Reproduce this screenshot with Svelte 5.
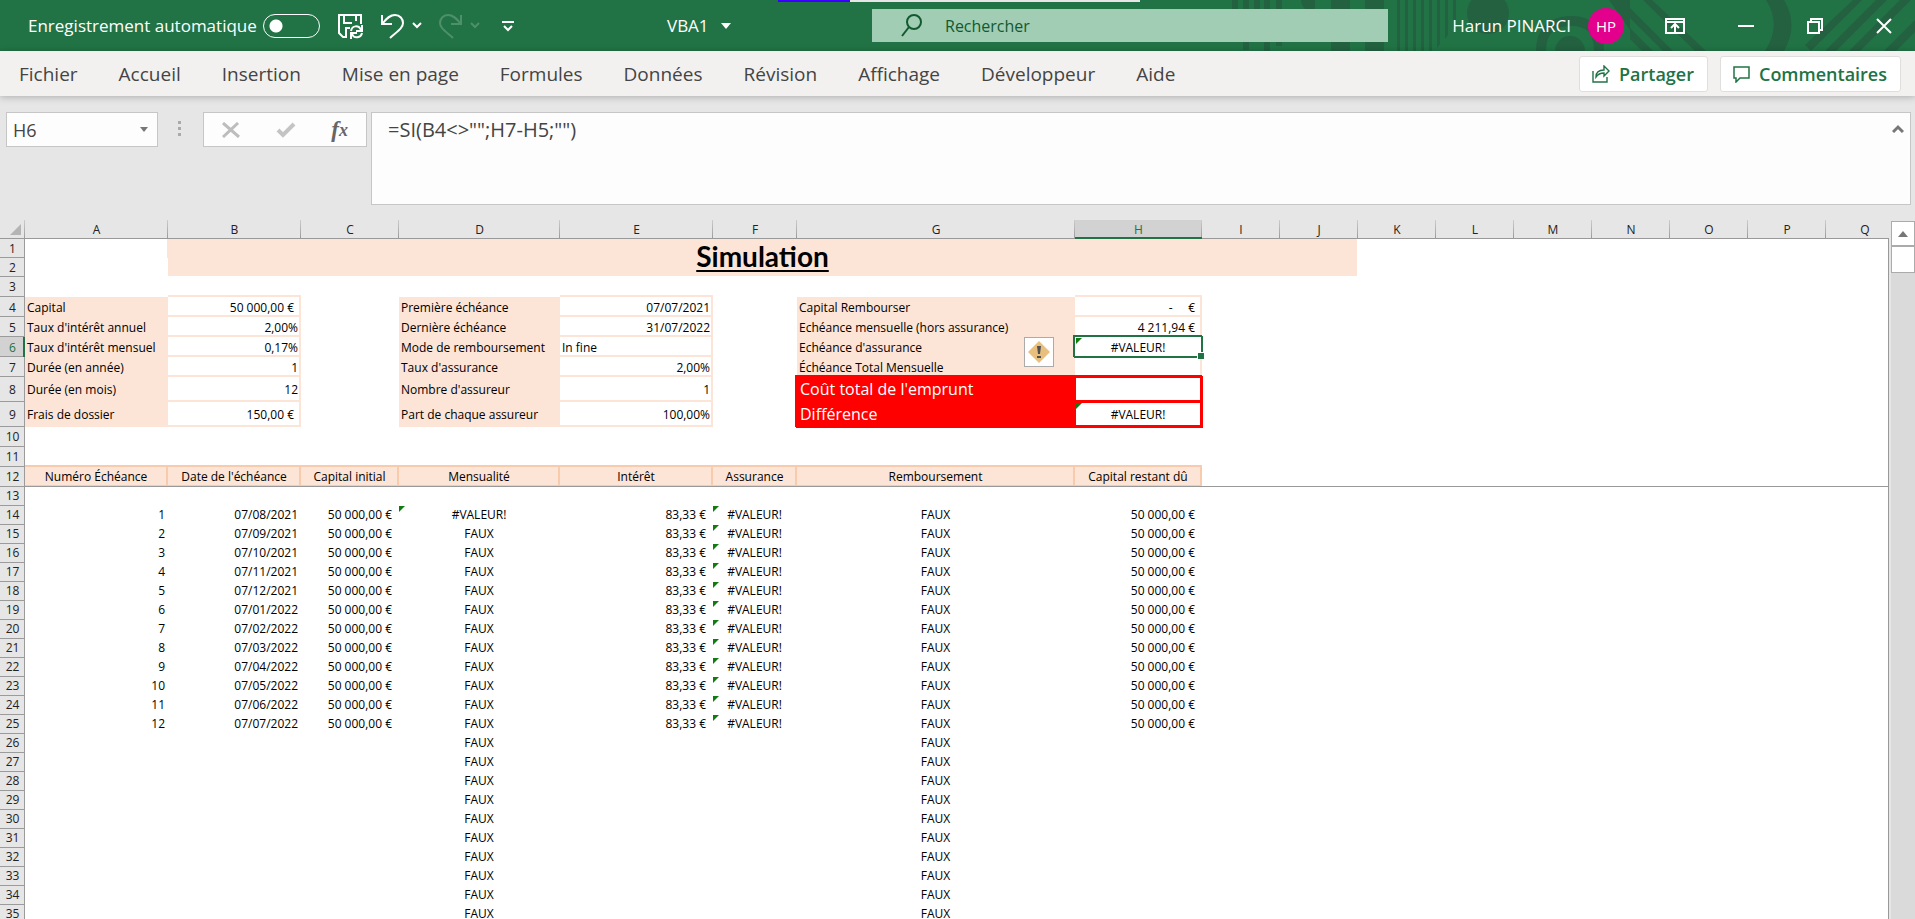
<script>
  const tabs = ['Fichier', 'Accueil', 'Insertion', 'Mise en page', 'Formules', 'Données', 'Révision', 'Affichage', 'Développeur', 'Aide'];

  const columns = [
    ['A', 143], ['B', 133], ['C', 98], ['D', 161], ['E', 153], ['F', 84], ['G', 278], ['H', 127],
    ['I', 78], ['J', 78], ['K', 78], ['L', 78], ['M', 78], ['N', 78], ['O', 78], ['P', 78], ['Q', 78]
  ];

  const letters = columns.map((c) => c[0]);
  const lastRow = 35;
  const cells = {};

  function set(ref, text, cls = '', flag = false) {
    cells[ref] = { text, cls, flag };
  }

  function rowHeight(r) {
    if (r === 8 || r === 9) return 25;
    if (r >= 3 && r <= 12) return 20;
    return 19;
  }

  // loan parameters, rows 4 to 9
  const params = [
    ['Capital', '50 000,00 €', 'Première échéance', '07/07/2021'],
    ["Taux d'intérêt annuel", '2,00%', 'Dernière échéance', '31/07/2022'],
    ["Taux d'intérêt mensuel", '0,17%', 'Mode de remboursement', 'In fine'],
    ['Durée (en année)', '1', "Taux d'assurance", '2,00%'],
    ['Durée (en mois)', '12', "Nombre d'assureur", '1'],
    ['Frais de dossier', '150,00 €', 'Part de chaque assureur', '100,00%']
  ];

  for (const ref of ['B3', 'E3', 'H3']) set(ref, '', 'above');

  params.forEach(([a, b, d, e], i) => {
    const r = i + 4;
    set('A' + r, a, 'label');
    set('B' + r, b, b.endsWith('€') ? 'box money' : 'box right');
    set('D' + r, d, 'label');
    set('E' + r, e, e === 'In fine' ? 'box' : 'box right');
  });

  set('G4', 'Capital Rembourser', 'label');
  set('G5', 'Echéance mensuelle (hors assurance)', 'label');
  set('G6', "Echéance d'assurance", 'label warn');
  set('G7', 'Échéance Total Mensuelle', 'label');
  set('G8', "Coût total de l'emprunt", 'total');
  set('G9', 'Différence', 'total');
  set('H4', '-\u00a0\u00a0\u00a0\u00a0\u00a0€', 'box money');
  set('H5', '4 211,94 €', 'box money');
  set('H6', '#VALEUR!', 'center selected', true);
  set('H7', '', 'box');
  set('H8', '', 'result');
  set('H9', '#VALEUR!', 'result center', true);

  const headings = ['Numéro Échéance', "Date de l'échéance", 'Capital initial', 'Mensualité', 'Intérêt', 'Assurance', 'Remboursement', 'Capital restant dû'];
  headings.forEach((h, i) => {
    set(letters[i] + 11, '', 'above-heading');
    set(letters[i] + 12, h, 'heading center');
  });

  for (let n = 1; n <= lastRow - 13; n++) {
    const r = n + 13;
    set('D' + r, n === 1 ? '#VALEUR!' : 'FAUX', 'center', n === 1);
    set('G' + r, 'FAUX', 'center');
    if (n > 12) continue;
    const month = String(((n + 6) % 12) + 1).padStart(2, '0');
    set('A' + r, String(n), 'right');
    set('B' + r, `07/${month}/${n < 6 ? 2021 : 2022}`, 'right');
    set('C' + r, '50 000,00 €', 'money');
    set('E' + r, '83,33 €', 'money');
    set('F' + r, '#VALEUR!', 'center', true);
    set('H' + r, '50 000,00 €', 'money');
  }

  // B1:J2 is one merged cell
  const rows = Array.from({ length: lastRow }, (_, i) => {
    const r = i + 1;
    const list = letters
      .filter((l) => r > 2 || l === 'A' || l > 'J')
      .map((l) => ({ ref: l + r, text: '', cls: '', flag: false, ...cells[l + r] }));
    if (r === 1) list.splice(1, 0, { ref: 'B1', text: 'Simulation', cls: 'title', span: true });
    return { r, list };
  });

  let selected = $state('H6');
  let formula = $state('=SI(B4<>"";H7-H5;"")');
  let autosave = $state(false);
</script>

<div class="app">
  <header class="titlebar">
    <svg class="pattern" width="690" height="51" viewBox="0 0 690 51" aria-hidden="true">
      <g fill="#236140">
        <path d="M7 0h6v9h-6zM18 0h6v50h-6zM29 0h6v9h-6zM39 0h6v51h-6zM51 0h6v46h-6zM76 0h14v9h-10q-4-4-4-9zM106 0h19v51h-19zM140 0h19v51h-19z" />
        <path d="M172 0h3v51h-3zM180 0h3v51h-3zM188 0h3v51h-3zM196 0h3v51h-3zM204 0h3v51h-3zM212 0h3v44l-3 4zM220 0h3v35l-3 4zM228 0h3v26l-3 4z" />
        <circle cx="263" cy="13" r="21" />
        <path d="M330 51a14 14 0 0 1 30 0z" />
        <path d="M384 0h21v30zM405 8l43 43h-10l-33-33zM405 28l23 23h-11l-12-12zM418 0h9l54 51h-11z" />
        <path d="M541 0h18q15 25 0 51h-19q17-26 1-51z" />
        <path d="M628 0h9l-51 51-6-6zM651 0h11l-51 51h-11zM675 0h11l-51 51h-11zM690 20v12l-19 19h-12z" />
      </g>
      <path d="M316 51q0-29 29-30t29 30" fill="none" stroke="#236140" stroke-width="10" />
    </svg>
    <span class="progress" aria-hidden="true"></span>

    <div class="quick">
      <label for="autosave">Enregistrement automatique</label>
      <input id="autosave" class="toggle" type="checkbox" bind:checked={autosave} />
      <button class="save" aria-label="Enregistrer">
        <svg width="26" height="26" viewBox="0 0 26 26" fill="none" stroke="#fff" stroke-width="2">
          <path d="M9 24H5L1 20V2h22v9M6 2v8h8M18 2v6M8 24v-9h4" />
          <path d="M13 18c1-6 8-6 10-1M24 12v6h-6M24 20c-1 5-8 6-10 1M13 26v-6h6" />
        </svg>
      </button>
      <button class="undo" aria-label="Annuler">
        <svg width="41" height="26" viewBox="0 0 41 26" fill="none" stroke="#fff" stroke-width="2">
          <path d="M1 2v9h10M2 10c4-5 7-8 12-8 5 0 8 4 8 8 0 5-5 8-13 15M32 10l4 4 4-4" />
        </svg>
      </button>
      <button class="undo" aria-label="Rétablir" disabled>
        <svg width="41" height="26" viewBox="0 0 41 26" fill="none" stroke="#4d9069" stroke-width="2">
          <path d="M22 2v9H12M21 10c-4-5-7-8-12-8-5 0-8 4-8 8 0 5 5 8 13 15M32 10l4 4 4-4" />
        </svg>
      </button>
      <button class="customise" aria-label="Personnaliser">
        <svg width="12" height="12" viewBox="0 0 12 12" fill="none" stroke="#fff" stroke-width="2">
          <path d="M0 2h12M2 6l4 4 4-4" />
        </svg>
      </button>
    </div>

    <button class="document">
      VBA1
      <svg width="10" height="6" viewBox="0 0 10 6"><path d="M0 0h10L5 6z" fill="#fff" /></svg>
    </button>

    <div class="search">
      <svg width="22" height="24" viewBox="0 0 22 24" fill="none" stroke="#13592f" stroke-width="2">
        <circle cx="13" cy="8" r="7" /><path d="M8 13L1 22" />
      </svg>
      <input type="text" aria-label="Rechercher" placeholder="Rechercher" />
    </div>

    <div class="account">
      <span class="user">Harun PINARCI</span>
      <span class="avatar">HP</span>
      <button aria-label="Options d'affichage du ruban">
        <svg width="20" height="16" viewBox="0 0 20 16" fill="none" stroke="#fff">
          <path d="M1 1h18v14H1zM1 4h18" stroke-width="2" /><path d="M10 14V7M6 10l4-4 4 4" stroke-width="2" />
        </svg>
      </button>
      <button aria-label="Réduire">
        <svg width="16" height="16" viewBox="0 0 16 16"><path d="M0 7h16v2H0z" fill="#fff" /></svg>
      </button>
      <button aria-label="Restaurer">
        <svg width="16" height="16" viewBox="0 0 16 16" fill="none" stroke="#fff" stroke-width="2">
          <path d="M1 4h11v11H1zM4 4V1h11v11h-3" />
        </svg>
      </button>
      <button aria-label="Fermer">
        <svg width="16" height="16" viewBox="0 0 16 16" stroke="#fff" stroke-width="2"><path d="M1 1l14 14M15 1L1 15" /></svg>
      </button>
    </div>
  </header>

  <nav class="ribbon">
    {#each tabs as tab}
      <button class="tab">{tab}</button>
    {/each}
    <div class="actions">
      <button class="action">
        <svg width="18" height="18" viewBox="0 0 18 18" fill="none" stroke="#217346" stroke-width="1.4">
          <path d="M1 6v11h14v-5M4 12c0-5 3-7 8-7V1l5 5-5 5V8c-4 0-6 1-8 4z" />
        </svg>
        Partager
      </button>
      <button class="action">
        <svg width="17" height="18" viewBox="0 0 17 18" fill="none" stroke="#217346" stroke-width="1.5">
          <path d="M1 2h15v11H7l-4 4v-4H1z" />
        </svg>
        Commentaires
      </button>
    </div>
  </nav>

  <section class="formula-bar">
    <div class="name-box">
      <input type="text" aria-label="Zone Nom" bind:value={selected} />
      <button aria-label="Liste des noms">
        <svg width="8" height="5" viewBox="0 0 8 5"><path d="M0 0h8L4 5z" fill="#777" /></svg>
      </button>
    </div>
    <span class="grip" aria-hidden="true"></span>
    <div class="edit">
      <button aria-label="Annuler la saisie">
        <svg width="18" height="16" viewBox="0 0 18 16" stroke="#bdbdbd" stroke-width="3"><path d="M1 1l16 14M16 1L1 15" /></svg>
      </button>
      <button aria-label="Valider la saisie">
        <svg width="20" height="16" viewBox="0 0 20 16" fill="none" stroke="#c4c4c4" stroke-width="4"><path d="M2 8l5 5L18 2" /></svg>
      </button>
      <button class="fx" aria-label="Insérer une fonction">f<sub>x</sub></button>
    </div>
    <div class="formula">
      <textarea aria-label="Barre de formule" spellcheck="false" bind:value={formula}></textarea>
      <button aria-label="Réduire la barre de formule">
        <svg width="12" height="9" viewBox="0 0 12 9" fill="none" stroke="#777" stroke-width="3"><path d="M1 8l5-5 5 5" /></svg>
      </button>
    </div>
  </section>

  <main class="workbook">
    <div class="sheet">
      <table>
        <colgroup>
          <col style="width: 25px" />
          {#each columns as [letter, width] (letter)}
            <col style="width: {width}px" />
          {/each}
        </colgroup>
        <thead>
          <tr>
            <th class="corner"><svg width="11" height="11" viewBox="0 0 11 11"><path d="M11 0v11H0z" fill="#b4b4b4" /></svg></th>
            {#each letters as letter}
              <th scope="col" class:current={letter === 'H'}>{letter}</th>
            {/each}
          </tr>
        </thead>
        <tbody>
          {#each rows as { r, list } (r)}
            <tr class:params={r >= 4 && r <= 7} class:schedule={r > 12} class:frozen={r === 12} style="height: {rowHeight(r)}px">
              <th scope="row" class:current={r === 6}>{r}</th>
              {#each list as cell (cell.ref)}
                <td class={cell.cls} colspan={cell.span ? 9 : 1} rowspan={cell.span ? 2 : 1}>
                  {#if cell.flag}<i class="flag"></i>{/if}
                  {cell.text}
                  {#if cell.ref === 'H6'}<i class="handle"></i>{/if}
                  {#if cell.ref === 'G6'}
                    <button class="alert" aria-label="Erreur de valeur">
                      <svg width="22" height="22" viewBox="0 0 22 22">
                        <path d="M11 0l11 11-11 11L0 11z" fill="#e8bf7d" />
                        <path d="M9 5h4l-1 8h-2zM9 15h4v2H9z" fill="#505050" />
                      </svg>
                    </button>
                  {/if}
                </td>
              {/each}
            </tr>
          {/each}
        </tbody>
      </table>
    </div>
    <div class="scrollbar">
      <button aria-label="Défiler vers le haut">
        <svg width="10" height="6" viewBox="0 0 10 6"><path d="M0 6h10L5 0z" fill="#777" /></svg>
      </button>
      <span class="thumb"></span>
    </div>
  </main>
</div>

<style>
  :global(body) {
    margin: 0;
    overflow: hidden;
  }

  .app {
    height: 100vh;
    display: flex;
    flex-direction: column;
    background: #e6e6e6;
    font-family: 'Open Sans', 'Noto Sans', sans-serif;
    color: #444;
  }

  button, input, textarea {
    font: inherit;
    color: inherit;
    background: none;
    border: 0;
    padding: 0;
    margin: 0;
    outline: 0;
  }

  button {
    display: flex;
    align-items: center;
    justify-content: center;
  }

  svg {
    display: block;
    flex: none;
  }

  .titlebar {
    position: relative;
    flex: none;
    height: 51px;
    display: grid;
    grid-template-columns: 667fr 205fr 516fr 527fr;
    align-items: center;
    background: #217346;
    color: #fff;
    font-size: 17px;
    line-height: 22px;
  }

  .titlebar > div, .document {
    position: relative;
  }

  .pattern {
    position: absolute;
    top: 0;
    right: 0;
  }

  .progress {
    position: absolute;
    top: 0;
    left: 778px;
    width: 362px;
    height: 2px;
    background: linear-gradient(90deg, #3a00ff 72px, #e6e6e6 72px);
  }

  .quick {
    display: flex;
    align-items: center;
    padding-left: 28px;
    white-space: nowrap;
  }

  .toggle {
    appearance: none;
    flex: none;
    width: 57px;
    height: 24px;
    margin: 0 18px 0 6px;
    border: 1px solid #fff;
    border-radius: 12px;
    background: radial-gradient(circle at 12px 11px, #fff 6px, transparent 7px);
  }

  .undo {
    margin-left: 17px;
  }

  .customise {
    margin-left: 22px;
  }

  .document {
    gap: 12px;
    justify-content: flex-start;
  }

  .search {
    display: flex;
    align-items: center;
    gap: 22px;
    height: 33px;
    padding-left: 29px;
    background: #a0cdb4;
    color: #13592f;
    font-size: 16px;
  }

  .search input {
    flex: 1;
  }

  .search input::placeholder {
    color: #13592f;
    opacity: 1;
  }

  .account {
    display: flex;
    align-items: center;
    justify-content: flex-end;
    gap: 53px;
    padding-right: 23px;
    white-space: nowrap;
  }

  .avatar {
    width: 36px;
    height: 36px;
    margin: 0 -12px 0 -36px;
    border-radius: 50%;
    background: #e3008c;
    font-size: 15px;
    line-height: 36px;
    text-align: center;
  }

  .ribbon {
    position: relative;
    flex: none;
    display: flex;
    align-items: center;
    gap: 41px;
    height: 45px;
    padding: 0 14px 0 19px;
    background: #f3f1ef;
    font-size: 19px;
    line-height: 26px;
    white-space: nowrap;
    box-shadow: 0 1px 7px rgba(0, 0, 0, 0.25);
  }

  .actions {
    display: flex;
    gap: 12px;
    margin-left: auto;
  }

  .action {
    gap: 9px;
    height: 36px;
    padding: 0 13px 0 12px;
    border: 1px solid #e1dfdd;
    border-radius: 3px;
    background: #fff;
    color: #217346;
    font-size: 18px;
    font-weight: 600;
  }

  .formula-bar {
    flex: none;
    display: flex;
    align-items: flex-start;
    padding: 16px 4px 15px 6px;
    font-size: 18px;
  }

  .name-box, .edit, .formula {
    box-sizing: border-box;
    display: flex;
    border: 1px solid #c6c6c6;
    background: #fdfdfd;
  }

  .name-box {
    width: 152px;
    height: 35px;
    padding: 0 9px 0 6px;
  }

  .name-box input {
    flex: 1;
    min-width: 0;
  }

  .grip {
    width: 3px;
    height: 15px;
    margin: 9px 22px 0 20px;
    background: repeating-linear-gradient(#aaa 0 3px, transparent 3px 6px);
  }

  .edit {
    justify-content: space-between;
    width: 164px;
    height: 35px;
    margin-right: 4px;
    padding: 0 18px;
  }

  .fx {
    font-family: 'Liberation Serif', serif;
    font-size: 23px;
    font-style: italic;
    font-weight: bold;
    line-height: 23px;
    color: #666;
  }

  .fx sub {
    font-size: 18px;
    line-height: 18px;
  }

  .formula {
    flex: 1;
    align-items: flex-start;
    height: 93px;
    padding: 4px 6px 4px 16px;
  }

  .formula textarea {
    flex: 1;
    height: 80px;
    font-size: 20px;
    line-height: 26px;
    resize: none;
  }

  .formula button {
    margin-top: 7px;
  }

  .workbook {
    flex: 1;
    min-height: 0;
    display: flex;
  }

  .sheet {
    position: relative;
    flex: 1;
    min-width: 0;
    overflow: hidden;
  }

  .sheet::after {
    content: '';
    position: absolute;
    top: 19px;
    right: 0;
    bottom: 0;
    width: 1px;
    background: #999;
  }

  table {
    table-layout: fixed;
    width: 1904px;
    border-collapse: separate;
    border-spacing: 0;
    font-family: 'Open Sans', sans-serif;
    font-size: 12px;
    line-height: 16px;
    color: #000;
  }

  th {
    padding: 0;
    font-weight: normal;
    color: #222;
    background: #e6e6e6;
  }

  thead th {
    height: 19px;
    box-shadow: inset 0 -1px #999;
    background: linear-gradient(#ccc, #999) right / 1px 100% no-repeat #e6e6e6;
  }

  .corner svg {
    margin-left: 10px;
  }

  thead th.current {
    background-color: #d2d2d2;
    box-shadow: inset 0 -2px #217346;
    color: #217346;
  }

  tbody th {
    box-shadow: inset -1px -1px #9b9b9b;
  }

  tbody th.current {
    background: #d2d2d2;
    box-shadow: inset -2px 0 #217346, inset 0 -1px #9b9b9b;
    color: #217346;
  }

  td {
    position: relative;
    padding: 0 3px 0 2px;
    background: #fff;
    white-space: nowrap;
  }

  .params td, .params th { padding-top: 2px; }
  .schedule td, .schedule th { padding-bottom: 2px; }

  .right { text-align: right; }
  .money { text-align: right; padding-right: 7px; }
  .center { text-align: center; }

  .title {
    padding-bottom: 4px;
    background: #fce4d6;
    box-shadow: inset -1px -1px #fff, -1px 0 #fce4d6;
    font-family: Lato, sans-serif;
    font-size: 28px;
    font-weight: bold;
    line-height: 32px;
    text-align: center;
    text-decoration: underline;
    text-decoration-thickness: 2px;
    text-underline-offset: 3px;
  }

  .label { background: #fce4d6; }
  .label.warn { z-index: 1; }
  .above { box-shadow: inset 0 -2px #fce4d6; }
  .box { box-shadow: inset -2px -2px #fce4d6; }

  .selected {
    z-index: 2;
    box-shadow: inset -1px -1px #217346, 0 0 0 1px #217346, -1px -1px 0 1px #217346;
  }

  .total {
    z-index: 1;
    padding-bottom: 2px;
    padding-left: 3px;
    background: #f00;
    box-shadow: -1px -1px 0 1px #f00, 0 0 0 1px #f00;
    font-size: 16px;
    line-height: 20px;
    color: #fff;
  }

  .result {
    z-index: 1;
    box-shadow: inset 1px 1px #f00, inset -2px -2px #f00, -1px -1px 0 1px #f00, 0 0 0 1px #f00;
  }

  .above-heading { box-shadow: inset 0 -2px #f8cbad; }

  .frozen td { box-shadow: inset 0 -1px #999; }

  .frozen .heading {
    background: #fce4d6;
    box-shadow: inset 0 -1px #999, inset -2px -2px #f8cbad;
  }

  .flag {
    position: absolute;
    top: 0;
    left: 0;
    border-top: 6px solid #107c10;
    border-right: 6px solid transparent;
  }

  .selected .flag, .result .flag {
    top: 1px;
    left: 1px;
  }

  .handle {
    position: absolute;
    right: -2px;
    bottom: -2px;
    width: 6px;
    height: 6px;
    background: #217346;
    box-shadow: -1px -1px #fff;
  }

  .alert {
    position: absolute;
    top: 0;
    right: 21px;
    box-sizing: border-box;
    width: 30px;
    height: 30px;
    border: 1px solid #ababab;
    background: #fff;
  }

  .scrollbar {
    flex: none;
    display: flex;
    flex-direction: column;
    width: 24px;
    margin: 1px 0 0 2px;
    background: #dadada;
  }

  .scrollbar button, .thumb {
    box-sizing: border-box;
    height: 25px;
    border: 1px solid #ababab;
    background: #fff;
  }

  .thumb {
    height: 27px;
  }
</style>
